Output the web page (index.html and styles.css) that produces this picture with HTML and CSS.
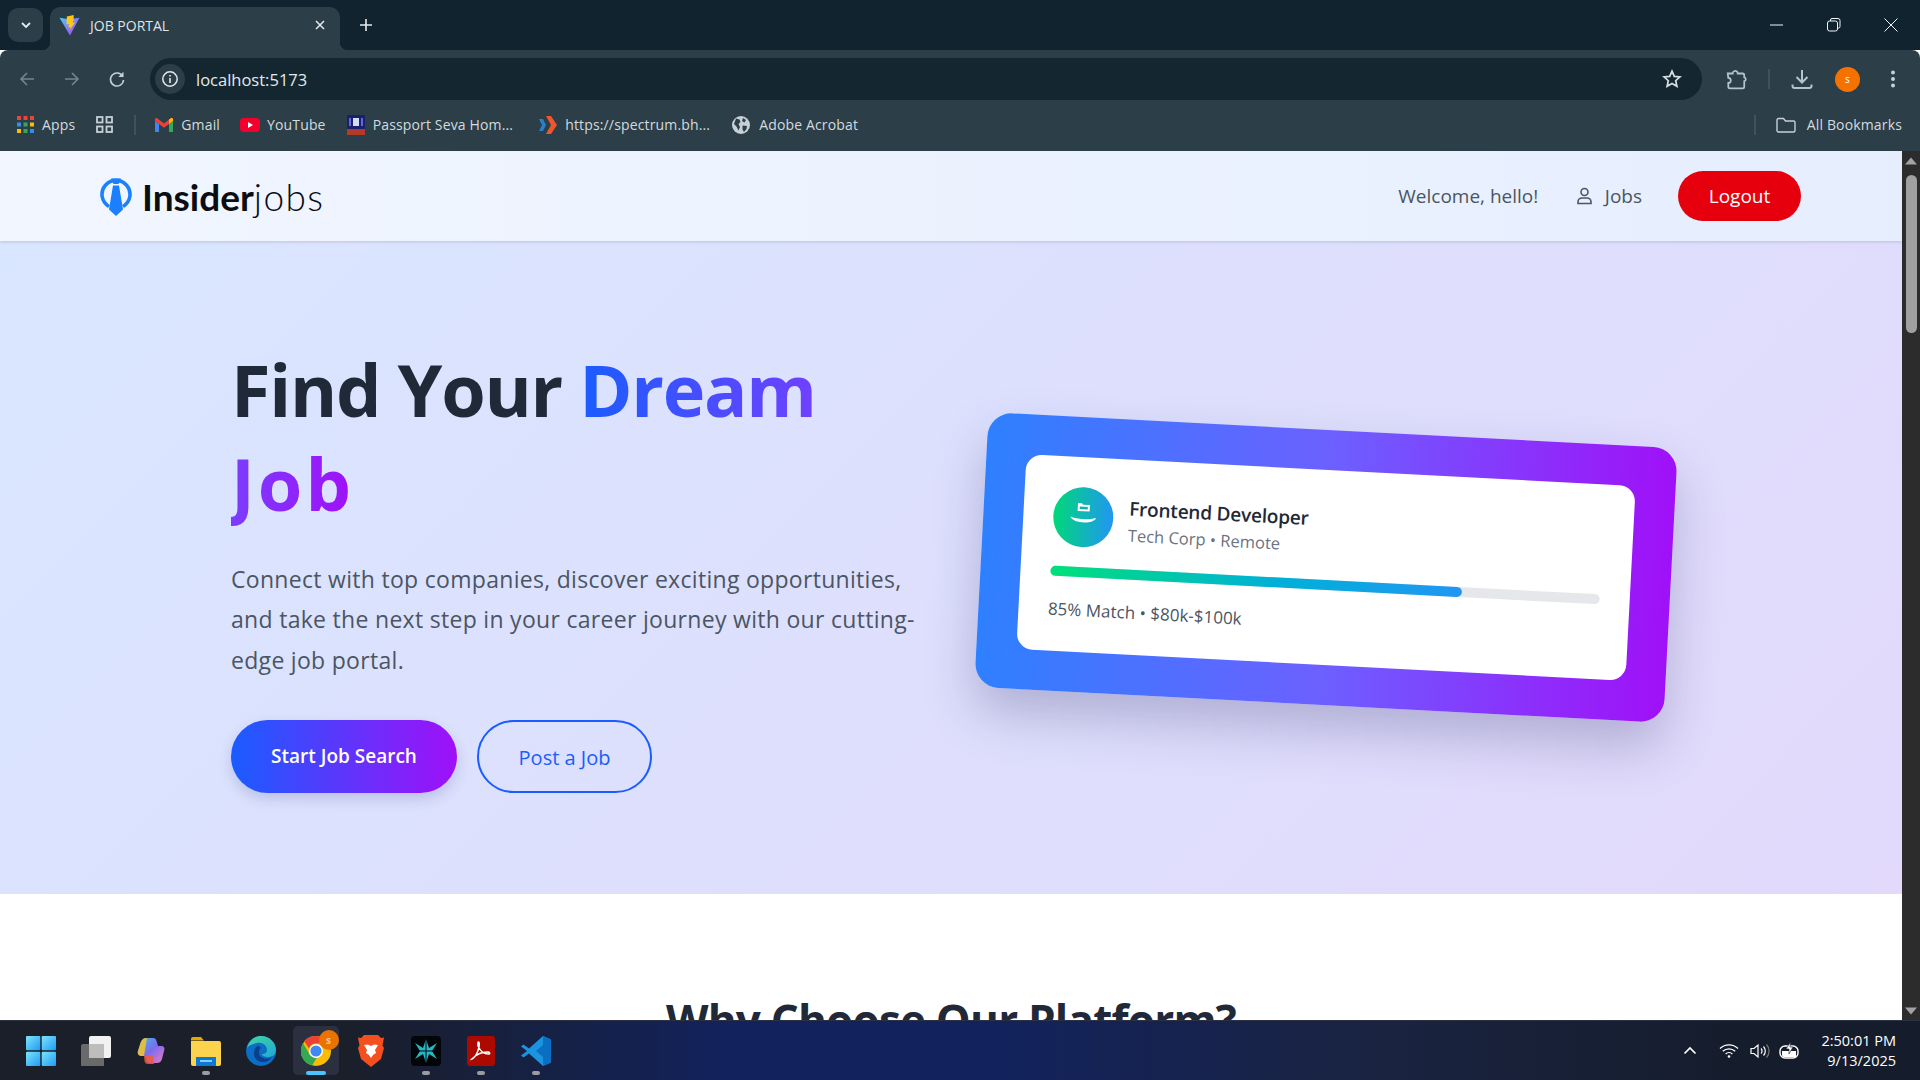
FILE: index.html
```html
<!DOCTYPE html>
<html lang="en">
<head>
    <meta charset="UTF-8">
    <meta name="viewport" content="width=device-width, initial-scale=1.0">
    <title>JOB PORTAL</title>
    <link rel="stylesheet" href="styles.css">
</head>
<body>
    <!-- browser tabs -->
    <div class="tabstrip">
        <div class="tab-menu">
            <svg width="12" height="8" viewBox="0 0 12 8"><path d="M2 2l4 4 4-4" fill="none" stroke="#e6ebee" stroke-width="1.8"/></svg>
        </div>
        <div class="tab">
            <svg class="favicon" width="22" height="21" viewBox="0 0 20 20">
                <defs>
                    <linearGradient id="viteA" x1="0" y1="0" x2="1" y2="1"><stop offset="0" stop-color="#41d1ff"/><stop offset="1" stop-color="#bd34fe"/></linearGradient>
                </defs>
                <path d="M0 2.500l9 1.600 10-1.600L10 19.500z" fill="url(#viteA)"/>
                <path d="M13.500 0L7 1.400 6.600 9l2.400-.4-.6 3.400 2-.5-.5 2.800L15 7l-2.500.5 1-3z" fill="#ffc517"/>
            </svg>
            <span class="tab-title">JOB PORTAL</span>
            <svg class="tab-close" width="10" height="10" viewBox="0 0 10 10"><path d="M1 1l8 8M9 1l-8 8" stroke="#e6ebee" stroke-width="1.500"/></svg>
        </div>
        <svg class="new-tab" width="14" height="14" viewBox="0 0 14 14"><path d="M7 1v12M1 7h12" stroke="#e6ebee" stroke-width="1.600"/></svg>
        <div class="win-controls">
            <svg width="14" height="14" viewBox="0 0 14 14"><path d="M0 7h13" stroke="#f2f4f5" stroke-width="1"/></svg>
            <svg width="14" height="14" viewBox="0 0 14 14"><rect x=".5" y="3" width="10" height="10" rx="2" fill="none" stroke="#f2f4f5"/><path d="M3.500 3V2a1.500 1.500 0 0 1 1.500-1.500h6A2 2 0 0 1 13 2.500v6A1.500 1.500 0 0 1 11.500 10h-1" fill="none" stroke="#f2f4f5"/></svg>
            <svg width="14" height="14" viewBox="0 0 14 14"><path d="M.5.5l13 13M13.500.5l-13 13" stroke="#f2f4f5" stroke-width="1"/></svg>
        </div>
    </div>

    <!-- address bar -->
    <div class="toolbar">
        <svg class="nav-icon" width="18" height="18" viewBox="0 0 18 18"><path d="M16 9H3M9 3L3 9l6 6" fill="none" stroke="#76858e" stroke-width="1.600"/></svg>
        <svg class="nav-icon" width="18" height="18" viewBox="0 0 18 18"><path d="M2 9h13M9 3l6 6-6 6" fill="none" stroke="#76858e" stroke-width="1.600"/></svg>
        <svg class="nav-icon" width="18" height="18" viewBox="0 0 18 18"><path d="M14.800 6.500A6.500 6.500 0 1 0 15.500 10" fill="none" stroke="#c6d0d6" stroke-width="1.600"/><path d="M15.500 1.800v5.200h-5.200z" fill="#c6d0d6"/></svg>
        <div class="omnibox">
            <div class="site-info">
                <svg width="18" height="18" viewBox="0 0 18 18"><circle cx="9" cy="9" r="7.200" fill="none" stroke="#e4e9ec" stroke-width="1.500"/><path d="M9 8v5M9 5v1.600" stroke="#e4e9ec" stroke-width="1.600"/></svg>
            </div>
            <span class="url">localhost:5173</span>
            <svg class="star" width="20" height="20" viewBox="0 0 20 20"><path d="M10 2.200l2.300 5.200 5.600.6-4.200 3.700 1.200 5.500-4.900-2.800-4.900 2.800 1.200-5.500L2.100 8l5.600-.6z" fill="none" stroke="#d7dfe3" stroke-width="1.700"/></svg>
        </div>
        <svg class="ext-icon" width="22" height="22" viewBox="0 0 20 20"><path d="M2.500 5H7a2.300 2.300 0 0 1 4.300-1.200L11.500 5h4.500A1.500 1.500 0 0 1 17.500 6.500V8.500a1.800 1.800 0 0 1 0 3.500V17A1.500 1.500 0 0 1 16 18.500H4.500A1.500 1.500 0 0 1 3 17V13.500A2.200 2.200 0 0 0 3 9z" fill="none" stroke="#b3c4ce" stroke-width="1.600"/></svg>
        <span class="tool-sep"></span>
        <svg class="dl-icon" width="22" height="22" viewBox="0 0 22 22"><path d="M11 2v12M5.500 9l5.500 5.500L16.500 9M1.500 16.500v1.500a2 2 0 0 0 2 2h15a2 2 0 0 0 2-2v-1.500" fill="none" stroke="#b3c4ce" stroke-width="2"/></svg>
        <span class="avatar">s</span>
        <svg class="dots" width="6" height="18" viewBox="0 0 6 18"><circle cx="3" cy="2.500" r="2" fill="#c6d0d6"/><circle cx="3" cy="9" r="2" fill="#c6d0d6"/><circle cx="3" cy="15.500" r="2" fill="#c6d0d6"/></svg>
    </div>

    <!-- bookmarks -->
    <div class="bookmarks">
        <div class="bm bm-apps">
            <svg width="17" height="17" viewBox="0 0 17 17">
                <rect x="0" y="0" width="4" height="4" fill="#e8453c"/><rect x="6.500" y="0" width="4" height="4" fill="#e8453c"/><rect x="13" y="0" width="4" height="4" fill="#e8453c"/>
                <rect x="0" y="6.500" width="4" height="4" fill="#2f8ff0"/><rect x="6.500" y="6.500" width="4" height="4" fill="#34a853"/><rect x="13" y="6.500" width="4" height="4" fill="#fbbc04"/>
                <rect x="0" y="13" width="4" height="4" fill="#fbbc04"/><rect x="6.500" y="13" width="4" height="4" fill="#34a853"/><rect x="13" y="13" width="4" height="4" fill="#2f8ff0"/>
            </svg>
            <span>Apps</span>
        </div>
        <svg class="bm-grid" width="17" height="17" viewBox="0 0 17 17"><g fill="none" stroke="#c6d0d6" stroke-width="1.800"><rect x="1" y="1" width="5.500" height="5.500"/><rect x="10.500" y="1" width="5.500" height="5.500"/><rect x="1" y="10.500" width="5.500" height="5.500"/><rect x="10.500" y="10.500" width="5.500" height="5.500"/></g></svg>
        <span class="bm-sep"></span>
        <div class="bm bm-gmail">
            <svg width="18" height="14" viewBox="0 0 18 14"><path d="M0 3v11h4V6z" fill="#4285f4"/><path d="M14 6v8h4V3z" fill="#34a853"/><path d="M0 1.500C0 .2 1.500-.4 2.500.4L9 5.500 15.500.4C16.500-.4 18 .2 18 1.500V3l-4 3-5 3.800L4 6 0 3z" fill="#ea4335"/><path d="M14 1.500l1.500-1.100C16.500-.4 18 .2 18 1.500V3l-4 3z" fill="#fbbc04"/></svg>
            <span>Gmail</span>
        </div>
        <div class="bm bm-youtube">
            <svg width="20" height="14" viewBox="0 0 20 14"><rect width="20" height="14" rx="4" fill="#f4002c"/><path d="M8 4l5 3-5 3z" fill="#fff"/></svg>
            <span>YouTube</span>
        </div>
        <div class="bm bm-passport">
            <svg width="20" height="20" viewBox="0 0 20 20"><rect x="1" width="18" height="15" fill="#1c1f6b"/><rect x="1" y="14" width="18" height="6" fill="#b23a2a"/><rect x="7" y="3" width="6" height="8" fill="#d6dcf0"/><rect x="3" y="3" width="2" height="8" fill="#5c6bd6"/><rect x="15" y="3" width="2" height="8" fill="#5c6bd6"/></svg>
            <span>Passport Seva Hom...</span>
        </div>
        <div class="bm bm-spectrum">
            <svg width="20" height="20" viewBox="0 0 20 20"><path d="M1 4h4l3 6-3 6H1l3-6z" fill="#2b7fc4"/><path d="M8 1h5l6 9-6 9H8l5-9z" fill="#f0562b"/></svg>
            <span>https://spectrum.bh...</span>
        </div>
        <div class="bm bm-adobe">
            <svg width="18" height="18" viewBox="0 0 18 18"><circle cx="9" cy="9" r="9" fill="#c6d0d6"/><path d="M4 2.500l3.500 1 1 2.500-2 2L8 11l-1.500 3.500-2-4L2 8zM11 2l3 2-1.500 2.500L10 5zM10.500 9.500l4.500.5-.5 3-2.500 3-1.500-2.500z" fill="#2c3e48"/></svg>
            <span>Adobe Acrobat</span>
        </div>
        <span class="bm-sep bm-sep-right"></span>
        <div class="bm bm-all">
            <svg width="20" height="16" viewBox="0 0 20 16"><path d="M1 3a1.500 1.500 0 0 1 1.500-1.500h5l2 2.500h8A1.500 1.500 0 0 1 19 5.500v8a1.500 1.500 0 0 1-1.500 1.500h-15A1.500 1.500 0 0 1 1 13.500z" fill="none" stroke="#c6d0d6" stroke-width="1.400"/></svg>
            <span>All Bookmarks</span>
        </div>
    </div>

    <div class="viewport">
        <div class="page">
            <nav class="navbar">
                <div class="logo">
                    <svg width="32" height="39" viewBox="0 0 32 39">
                        <path d="M9 29.500A14 14 0 1 1 23 29.500" fill="none" stroke="#1a80ff" stroke-width="3.600"/>
                        <path d="M11 1.500h10l-2.500 5.500H13.500z" fill="#1a80ff"/>
                        <path d="M13 8.500h6l4 24-7 6.500-7-6.500z" fill="#1a80ff"/>
                    </svg>
                    <span class="logo-text"><b>Insider</b><span class="logo-jobs">jobs</span></span>
                </div>
                <div class="nav-right">
                    <span class="welcome">Welcome, hello!</span>
                    <a class="jobs-link">
                        <svg width="15" height="18" viewBox="0 0 15 18"><circle cx="7.500" cy="5" r="3.500" fill="none" stroke="#4b5563" stroke-width="1.600"/><path d="M1 16.500v-1.500a4 4 0 0 1 4-4h5a4 4 0 0 1 4 4v1.500z" fill="none" stroke="#4b5563" stroke-width="1.600"/></svg>
                        <span>Jobs</span>
                    </a>
                    <button class="logout">Logout</button>
                </div>
            </nav>

            <section class="hero">
                <div class="hero-inner">
                    <div class="hero-text">
                        <h1>Find Your <span class="word-dream">Dream</span> <span class="word-job">Job</span></h1>
                        <p>Connect with top companies, discover exciting opportunities, and take the next step in your career journey with our cutting-edge job portal.</p>
                        <div class="hero-buttons">
                            <button class="btn-primary">Start Job Search</button>
                            <button class="btn-outline">Post a Job</button>
                        </div>
                    </div>
                    <div class="hero-card">
                        <div class="job-card">
                            <div class="job-head">
                                <div class="job-icon">
                                    <svg width="30" height="30" viewBox="0 0 30 30"><path d="M9 1h4l1 1.500h7V9H9z" fill="#fff"/><rect x="11" y="4.500" width="8" height="2.500" fill="#10b0b0"/><path d="M2 15c8 2.500 18 2.500 26 0-3 7-23 7-26 0z" fill="#fff"/></svg>
                                </div>
                                <div>
                                    <h3>Frontend Developer</h3>
                                    <span class="job-sub">Tech Corp • Remote</span>
                                </div>
                            </div>
                            <div class="progress"><div class="progress-fill"></div></div>
                            <span class="job-meta">85% Match • $80k-$100k</span>
                        </div>
                    </div>
                </div>
            </section>

            <section class="features">
                <h2>Why Choose Our Platform?</h2>
            </section>
        </div>
        <div class="scrollbar">
            <svg width="12" height="8" viewBox="0 0 12 8"><path d="M6 .5L12 7.500H0z" fill="#a3a3a3"/></svg>
            <div class="scroll-thumb"></div>
            <svg class="scroll-down" width="12" height="8" viewBox="0 0 12 8"><path d="M6 7.500L12 .5H0z" fill="#a3a3a3"/></svg>
        </div>
    </div>

    <!-- windows taskbar -->
    <footer class="taskbar">
        <div class="task-icons">
            <div class="task-item">
                <svg width="30" height="30" viewBox="0 0 30 30">
                    <defs><linearGradient id="winA" x1="0" y1="0" x2="1" y2="1"><stop offset="0" stop-color="#7fe2fb"/><stop offset="1" stop-color="#1c9cf5"/></linearGradient></defs>
                    <rect x="0" y="0" width="14.300" height="14.300" rx="1" fill="url(#winA)"/><rect x="15.700" y="0" width="14.300" height="14.300" rx="1" fill="url(#winA)"/><rect x="0" y="15.700" width="14.300" height="14.300" rx="1" fill="url(#winA)"/><rect x="15.700" y="15.700" width="14.300" height="14.300" rx="1" fill="url(#winA)"/>
                </svg>
            </div>
            <div class="task-item">
                <svg width="30" height="30" viewBox="0 0 30 30"><rect x="0" y="8" width="23" height="23" rx="2" fill="#6a6a6a"/><rect x="8" y="0" width="22" height="22" rx="2" fill="#f1f1f1"/><rect x="8" y="8" width="15" height="14" fill="#bdbdbd"/></svg>
            </div>
            <div class="task-item">
                <svg width="28" height="28" viewBox="0 0 28 28">
                    <defs><linearGradient id="copA" x1="0" y1="0" x2="1" y2="1"><stop offset="0" stop-color="#3ec0e8"/><stop offset=".5" stop-color="#7a6cf0"/><stop offset="1" stop-color="#f07ac0"/></linearGradient></defs>
                    <path d="M10 1h6c2 0 3 1 3.500 3L21 9h3c3 0 4 2 3 5l-2 8c-1 3-3 4-5 4h-7c-2 0-3-1-3.500-3L8 19H5c-3 0-5-2-4-5l2.500-8C5 2 7 1 10 1z" fill="url(#copA)"/>
                    <path d="M1 14l2.500-8C5 2 7 1 10 1l-2 12-1 6H5c-3 0-5-2-4-5z" fill="#f7c428" opacity=".85"/>
                    <path d="M11 27c-2 0-3-1-3.500-3L7 19l9-1 1 9z" fill="#f05a3c" opacity=".85"/>
                </svg>
            </div>
            <div class="task-item running">
                <svg width="30" height="30" viewBox="0 0 30 30"><path d="M0 3a2 2 0 0 1 2-2h8l3 3.500H0z" fill="#e5a800"/><path d="M0 5h28a2 2 0 0 1 2 2v21a2 2 0 0 1-2 2H2a2 2 0 0 1-2-2z" fill="#fcd34d"/><rect x="5" y="21" width="20" height="9" fill="#0f78d4"/><rect x="9" y="24" width="12" height="2" fill="#7fd0ff"/></svg>
            </div>
            <div class="task-item">
                <svg width="30" height="30" viewBox="0 0 30 30">
                    <defs><linearGradient id="edgeA" x1="0" y1="0" x2="1" y2="1"><stop offset="0" stop-color="#41d69e"/><stop offset="1" stop-color="#1fa8d8"/></linearGradient></defs>
                    <circle cx="15" cy="15" r="15" fill="#0d6cc4"/>
                    <path d="M1 12C3 4 9 0 15 0c9 0 15 7 15 14 0 5-4 7-8 7-3 0-6-1-6-3 3 0 5-1 5-4 0-5-5-8-10-7C6 8 2 10 1 12z" fill="url(#edgeA)"/>
                    <path d="M13 10c-3 0-5 3-5 7 0 5 3 9 9 9 4 0 7-2 9-5-3 2-6 2-9 1-3-1-4-3-4-5 0-3 1-5 2-5z" fill="#0a3f8c"/>
                </svg>
            </div>
            <div class="task-item active">
                <svg width="30" height="30" viewBox="0 0 30 30">
                    <circle cx="15" cy="15" r="15" fill="#fbbc04"/>
                    <path d="M15 0a15 15 0 0 1 13 7.500H15a7.500 7.500 0 0 0-7 5L3 5A15 15 0 0 1 15 0z" fill="#ea4335"/>
                    <path d="M2 7a15 15 0 0 0 9 22.500l5-8a7.500 7.500 0 0 1-8.500-5z" fill="#34a853"/>
                    <circle cx="15" cy="15" r="7" fill="#fff"/><circle cx="15" cy="15" r="5.600" fill="#4285f4"/>
                </svg>
                <span class="task-badge">s</span>
            </div>
            <div class="task-item">
                <svg width="26" height="32" viewBox="0 0 26 32"><path d="M6 0h14l3 3 3-.5-1.500 8L26 13l-3 11-10 8-10-8L0 13l1.500-2.500L0 2.500 3 3z" fill="#f4501f"/><path d="M6 10l4-.5 3 1.500 3-1.500 4 .5-3 5 1 3-3 2-2 3-2-3-3-2 1-3z" fill="#fff"/></svg>
            </div>
            <div class="task-item running">
                <svg width="30" height="30" viewBox="0 0 30 30"><rect width="30" height="30" rx="4" fill="#020608"/><path d="M15 3l3 9 8-5-5 8 5 8-8-5-3 9-3-9-8 5 5-8-5-8 8 5z" fill="#27b8c4"/><path d="M15 3v24M4 15h22" stroke="#020608" stroke-width="1"/></svg>
            </div>
            <div class="task-item running">
                <svg width="28" height="30" viewBox="0 0 28 30"><rect width="28" height="30" rx="3" fill="#ac0a00"/><path d="M5 23c3-1 6-7 7-12 .4-3 .3-5-.5-5s-1 3 0 5c2 4 5 7 10 7 2 0 1.500-2-1-2-5 0-11 2-15.500 7z" fill="none" stroke="#fff" stroke-width="1.500"/></svg>
            </div>
            <div class="task-item running">
                <svg width="30" height="30" viewBox="0 0 30 30"><path d="M22 0l8 3.500v23L22 30 8 17.500l-5.500 4L0 19.500 6 15 0 10.500l2.500-2L8 12.500z" fill="#1a94e0"/><path d="M22 0l8 3.500v23L22 30V21l-7-6 7-6z" fill="#0a6fc0"/></svg>
            </div>
        </div>
        <div class="tray">
            <svg class="tray-up" width="14" height="9" viewBox="0 0 14 9"><path d="M1.500 7.500L7 2l5.500 5.500" fill="none" stroke="#fff" stroke-width="1.700"/></svg>
            <svg class="tray-wifi" width="20" height="15" viewBox="0 0 20 15"><g fill="none" stroke="#fff" stroke-width="1.300"><path d="M1 5.500a13 13 0 0 1 18 0"/><path d="M3.800 8.300a9 9 0 0 1 12.400 0"/><path d="M6.600 11a5 5 0 0 1 6.800 0"/></g><circle cx="10" cy="13.500" r="1.300" fill="#fff"/></svg>
            <svg class="tray-sound" width="20" height="16" viewBox="0 0 20 16"><path d="M1 5.500h3l4-3.500v12l-4-3.500H1z" fill="none" stroke="#fff" stroke-width="1.200"/><path d="M11 5.500a3.500 3.500 0 0 1 0 5M13.500 3.500a6.500 6.500 0 0 1 0 9" fill="none" stroke="#fff" stroke-width="1.200"/><path d="M16.500 1.500a9.500 9.500 0 0 1 0 13" fill="none" stroke="#777" stroke-width="1.200"/></svg>
            <svg class="tray-cloud" width="20" height="17" viewBox="0 0 20 17"><rect x="1" y="4" width="18" height="12" rx="5" fill="none" stroke="#fff" stroke-width="1.400"/><path d="M3 9h14v6H5a2 2 0 0 1-2-2z" fill="#fff"/><path d="M11.500 0L7 7h3v5l4-7h-3z" fill="#fff" stroke="#151d2d" stroke-width=".6"/></svg>
            <div class="clock">
                <span>2:50:01 PM</span>
                <span>9/13/2025</span>
            </div>
        </div>
    </footer>
</body>
</html>
```

FILE: styles.css
```css
* {
    box-sizing: border-box;
}
html, body {
    height: 100%;
}
body {
    margin: 0;
    display: flex;
    flex-direction: column;
    height: 1080px;
    overflow: hidden;
    font-family: "Open Sans", "Noto Sans", sans-serif;
    background-color: #fff;
}
svg {
    flex-shrink: 0;
    display: block;
}

/* browser chrome */
.tabstrip {
    height: 50px;
    display: flex;
    align-items: flex-start;
    background-color: #10232e;
    padding-left: 8px;
}
.tab-menu {
    width: 35px;
    height: 34px;
    margin-top: 8px;
    border-radius: 10px;
    background-color: #2c3e48;
    display: flex;
    align-items: center;
    justify-content: center;
}
.tab {
    width: 290px;
    height: 43px;
    margin-top: 7px;
    margin-left: 7px;
    padding: 0 15px 7px 9px;
    border-radius: 10px 10px 0 0;
    background-color: #2c3e48;
    display: flex;
    align-items: center;
    position: relative;
}
.tab::before, .tab::after {
    content: "";
    position: absolute;
    bottom: 0;
    width: 8px;
    height: 8px;
    background: radial-gradient(circle at 0 0, #10232e 8px, #2c3e48 8.5px);
}
.tab::before {
    left: -8px;
}
.tab::after {
    right: -8px;
    background: radial-gradient(circle at 100% 0, #10232e 8px, #2c3e48 8.5px);
}
.tab-title {
    margin-left: 9px;
    flex: 1;
    font-size: 14px;
    color: #dfe5e8;
}
.new-tab {
    margin: 18px 0 0 19px;
}
.win-controls {
    margin-left: auto;
    margin-top: 18px;
    padding-right: 22px;
    display: flex;
    gap: 43px;
}
.toolbar {
    height: 50px;
    padding: 8px 0 0 18px;
    display: flex;
    align-items: center;
    background-color: #2c3e48;
    border-radius: 8px 8px 0 0;
}
.nav-icon {
    margin-right: 27px;
}
.omnibox {
    width: 1552px;
    height: 42px;
    margin-left: -3px;
    border-radius: 21px;
    background-color: #142630;
    display: flex;
    align-items: center;
    padding: 0 20px 0 5px;
}
.site-info {
    width: 30px;
    height: 30px;
    border-radius: 50%;
    background-color: #2c3e48;
    display: flex;
    align-items: center;
    justify-content: center;
}
.url {
    margin-left: 11px;
    flex: 1;
    font-size: 16.500px;
    color: #e4e9ec;
}
.ext-icon {
    margin-left: 23px;
}
.tool-sep {
    width: 2px;
    height: 20px;
    margin-left: 21px;
    background-color: #41525c;
}
.dl-icon {
    margin-left: 21px;
}
.avatar {
    width: 25px;
    height: 25px;
    margin-left: 22px;
    border-radius: 50%;
    background-color: #f57200;
    color: #fff;
    font-size: 10px;
    display: flex;
    align-items: center;
    justify-content: center;
}
.dots {
    margin-left: 30px;
}
.bookmarks {
    height: 51px;
    padding: 0 0 2px 17px;
    display: flex;
    align-items: center;
    background-color: #2c3e48;
    font-size: 14px;
    letter-spacing: 0.15px;
    color: #d3dbdf;
}
.bm {
    display: flex;
    align-items: center;
    gap: 7px;
    white-space: nowrap;
}
.bm-apps, .bm-gmail {
    gap: 8px;
}
.bm-grid {
    margin-left: 21px;
}
.bm-sep {
    width: 2px;
    height: 20px;
    margin-left: 21px;
    background-color: #41525c;
}
.bm-gmail {
    margin-left: 19px;
}
.bm-youtube {
    margin-left: 20px;
}
.bm-passport {
    margin-left: 20px;
}
.bm-spectrum {
    margin-left: 25px;
}
.bm-adobe {
    margin-left: 22px;
    gap: 9px;
}
.bm-sep-right {
    margin-left: auto;
}
.bm-all {
    margin-left: 20px;
    padding-right: 18px;
    gap: 11px;
}

.viewport {
    flex: 1;
    min-height: 0;
    display: flex;
}
.page {
    flex: 1;
    min-width: 0;
    overflow: hidden;
}
.scrollbar {
    width: 18px;
    padding: 6px 0 5px;
    background-color: #2c2c2c;
    display: flex;
    flex-direction: column;
    align-items: center;
}
.scroll-thumb {
    width: 11px;
    height: 158px;
    margin-top: 10px;
    border-radius: 6px;
    background-color: #a0a0a0;
}
.scroll-down {
    margin-top: auto;
}

/* navbar */
.navbar {
    height: 90px;
    padding: 0 101px 0 100px;
    display: flex;
    align-items: center;
    justify-content: space-between;
    background: linear-gradient(90deg, #f1f6ff, #e6eefe);
    box-shadow: 0 1px 3px rgba(60, 60, 120, 0.2);
    position: relative;
}
.logo {
    display: flex;
    align-items: center;
    gap: 10px;
}
.logo-text {
    font-family: "Lato", sans-serif;
    font-size: 37px;
    font-weight: 300;
    color: #0b0d12;
}
.logo-text b {
    font-weight: 700;
}
.logo-jobs {
    letter-spacing: 1.4px;
}
.nav-right {
    display: flex;
    align-items: center;
}
.welcome, .jobs-link {
    font-size: 19px;
    color: #4b5563;
}
.jobs-link {
    margin-left: 38.500px;
    display: flex;
    align-items: center;
    gap: 13px;
}
.logout {
    width: 123px;
    height: 50px;
    margin-left: 36px;
    border: none;
    border-radius: 25px;
    background-color: #e6000e;
    color: #fff;
    font-family: inherit;
    font-size: 19px;
}

/* hero */
.hero {
    height: 653px;
    background: linear-gradient(135deg, #d9e6ff, #e2d9fb);
    display: flex;
    align-items: center;
}
.hero-inner {
    width: 1536px;
    margin: 0 auto;
    padding: 0 48px;
    display: grid;
    grid-template-columns: 1fr 1fr;
    gap: 64px;
    align-items: center;
}
h1 {
    margin: 0 0 29px;
    font-size: 72px;
    font-weight: 700;
    line-height: 94px;
    letter-spacing: -1.300px;
    color: #1f2937;
}
.word-dream, .word-job {
    -webkit-background-clip: text;
    background-clip: text;
    color: transparent;
}
.word-dream {
    background-image: linear-gradient(90deg, #1a5cff, #7040ff);
}
.word-job {
    letter-spacing: 3px;
    background-image: linear-gradient(90deg, #7c3cff, #a010f8);
}
.hero-text p {
    margin: 0 0 40px;
    font-size: 23px;
    line-height: 40.300px;
    letter-spacing: 0.3px;
    color: #4b5563;
}
.hero-buttons {
    display: flex;
    gap: 20px;
}
.btn-primary, .btn-outline {
    height: 73px;
    border-radius: 37px;
    font-family: inherit;
    font-size: 19px;
}
.btn-primary {
    width: 226px;
    border: none;
    font-weight: 600;
    color: #fff;
    background: linear-gradient(90deg, #1a5cff, #a010f8);
    box-shadow: 0 6px 14px rgba(60, 60, 140, 0.2);
}
.btn-outline {
    width: 175px;
    border: 2px solid #1a5cff;
    background-color: transparent;
    color: #1a5cff;
    padding-top: 4px;
    font-size: 20px;
    font-weight: 500;
}

/* floating card */
.hero-card {
    height: 275px;
    margin-left: -2px;
    padding: 40px 40px 40px 39.500px;
    border-radius: 24px;
    background: linear-gradient(90deg, #2e80ff, #6c60ff 50%, #a010f8);
    transform: rotate(3deg);
    box-shadow: 0 25px 50px rgba(40, 40, 100, 0.25);
}
.job-card {
    height: 195px;
    padding: 30px;
    border-radius: 16px;
    background-color: #fff;
}
.job-head {
    display: flex;
    align-items: center;
    gap: 16px;
}
.job-icon {
    width: 60px;
    height: 60px;
    border-radius: 50%;
    background: linear-gradient(90deg, #00d878, #2196f3);
    display: flex;
    align-items: center;
    justify-content: center;
}
.job-head h3 {
    margin: 0;
    font-size: 19px;
    font-weight: 600;
    line-height: 30px;
    letter-spacing: -0.200px;
    color: #1f2937;
}
.job-sub, .job-meta {
    font-size: 16.500px;
    color: #6b7280;
}
.progress {
    height: 10px;
    margin: 20px 0 21px;
    border-radius: 5px;
    background-color: #e5e7eb;
}
.progress-fill {
    width: 75%;
    height: 100%;
    border-radius: 5px;
    background: linear-gradient(90deg, #00e07a, #00b0d8 55%, #2196f3);
}
.job-meta {
    font-size: 17px;
    color: #4b5563;
}

/* section under the fold */
.features {
    padding-top: 96px;
    text-align: center;
}
.features h2 {
    margin: 0;
    font-size: 44px;
    font-weight: 700;
    line-height: 60px;
    letter-spacing: -0.800px;
    color: #1f2937;
}

/* taskbar */
.taskbar {
    height: 60px;
    flex-shrink: 0;
    display: flex;
    align-items: center;
    justify-content: space-between;
    background: linear-gradient(90deg, #1a1f2a 0%, #1a1f2a 18%, #12225c 38%, #12225c 52%, #1a2340 72%, #151d2d 90%);
    border-top: 1px solid #2c3040;
}
.task-icons {
    display: flex;
    align-items: center;
    padding-left: 13px;
}
.task-item {
    width: 55px;
    height: 59px;
    display: flex;
    align-items: center;
    justify-content: center;
    position: relative;
}
.task-item.running::after, .task-item.active::after {
    content: "";
    position: absolute;
    bottom: 5px;
    left: 50%;
    width: 8px;
    height: 4px;
    margin-left: -4px;
    border-radius: 2px;
    background-color: #9a9ca2;
}
.task-item.active {
    background-color: #2a3040;
    border-radius: 5px;
    height: 49px;
    width: 46px;
    margin: 0 4.500px;
}
.task-item.active::after {
    width: 20px;
    margin-left: -10px;
    bottom: 0;
    background-color: #4cc2ff;
}
.task-badge {
    position: absolute;
    top: 4px;
    right: 0;
    width: 20px;
    height: 20px;
    border-radius: 50%;
    background-color: #ea7300;
    color: #f7c48e;
    font-size: 10px;
    font-weight: 700;
    display: flex;
    align-items: center;
    justify-content: center;
}
.tray {
    display: flex;
    align-items: center;
    padding-right: 24px;
    color: #fff;
}
.tray-wifi {
    margin-left: 22px;
}
.tray-sound {
    margin-left: 11px;
}
.tray-cloud {
    margin-left: 9px;
}
.clock {
    margin-left: 22px;
    display: flex;
    flex-direction: column;
    align-items: flex-end;
    font-size: 14.500px;
    line-height: 20px;
}
```
